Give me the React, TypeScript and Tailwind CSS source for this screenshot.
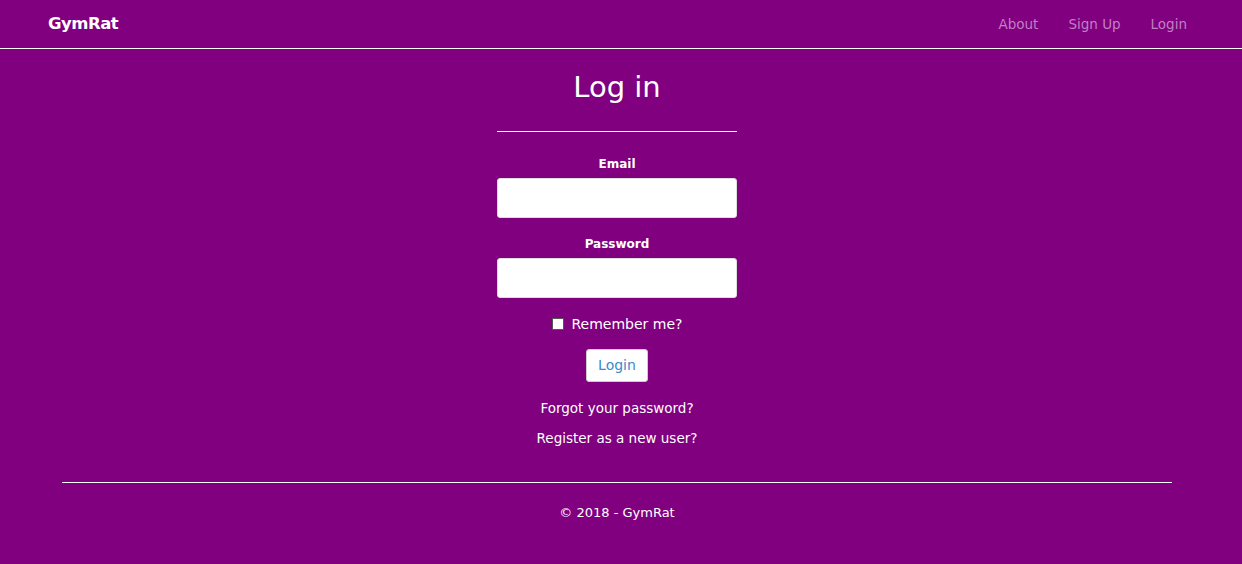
import React from 'react';

const navLinks = ['About', 'Sign Up', 'Login'];

const App: React.FC = () => {
  return (
    <div className="min-h-[564px] bg-[#800080] text-white font-['DejaVu_Sans',sans-serif] text-[14px]">
      <header className="h-[49px] border-b border-white flex items-center justify-between pl-[48px] pr-[55px]">
        <a href="#" className="text-[16.5px] font-bold tracking-[-0.5px]">GymRat</a>
        <nav className="flex items-center gap-[30px]">
          {navLinks.map((l) => (
            <a key={l} href="#" className="text-[#c27fc2] text-[13.5px]">{l}</a>
          ))}
        </nav>
      </header>

      <div className="w-[1234px]">
        <main className="flex flex-col items-center">
          <h2 className="mt-[18px] text-[29px] leading-[40px] font-normal">Log in</h2>
          <div className="w-[240px] border-t border-white mt-[24px]" />
          <form className="w-[240px] flex flex-col items-center mt-[22px]">
            <label className="font-bold text-[12px] leading-[20px]">Email</label>
            <input type="email" className="mt-[4px] w-full h-[40px] bg-white rounded-[3px] border border-[#ddd]" />
            <label className="mt-[16px] font-bold text-[12px] leading-[20px]">Password</label>
            <input type="password" className="mt-[4px] w-full h-[40px] bg-white rounded-[3px] border border-[#ddd]" />
            <label className="mt-[16px] flex items-center gap-[8px] leading-[20px]">
              <span className="w-[12px] h-[12px] bg-white border border-[#555]" />
              Remember me?
            </label>
            <button type="button" className="mt-[15px] h-[33px] px-[11px] bg-white text-[#3a8bc8] rounded-[3px] border border-[#ccc]">Login</button>
            <a href="#" className="mt-[16px] leading-[20px] text-[13.5px]">Forgot your password?</a>
            <a href="#" className="mt-[10px] leading-[20px] text-[13.5px]">Register as a new user?</a>
          </form>
        </main>

        <footer className="mx-[62px] mt-[34px] border-t border-white pt-[20px] text-center">
          <p className="leading-[20px] text-[13px]">© 2018 - GymRat</p>
        </footer>
      </div>
    </div>
  );
};

export default App;
